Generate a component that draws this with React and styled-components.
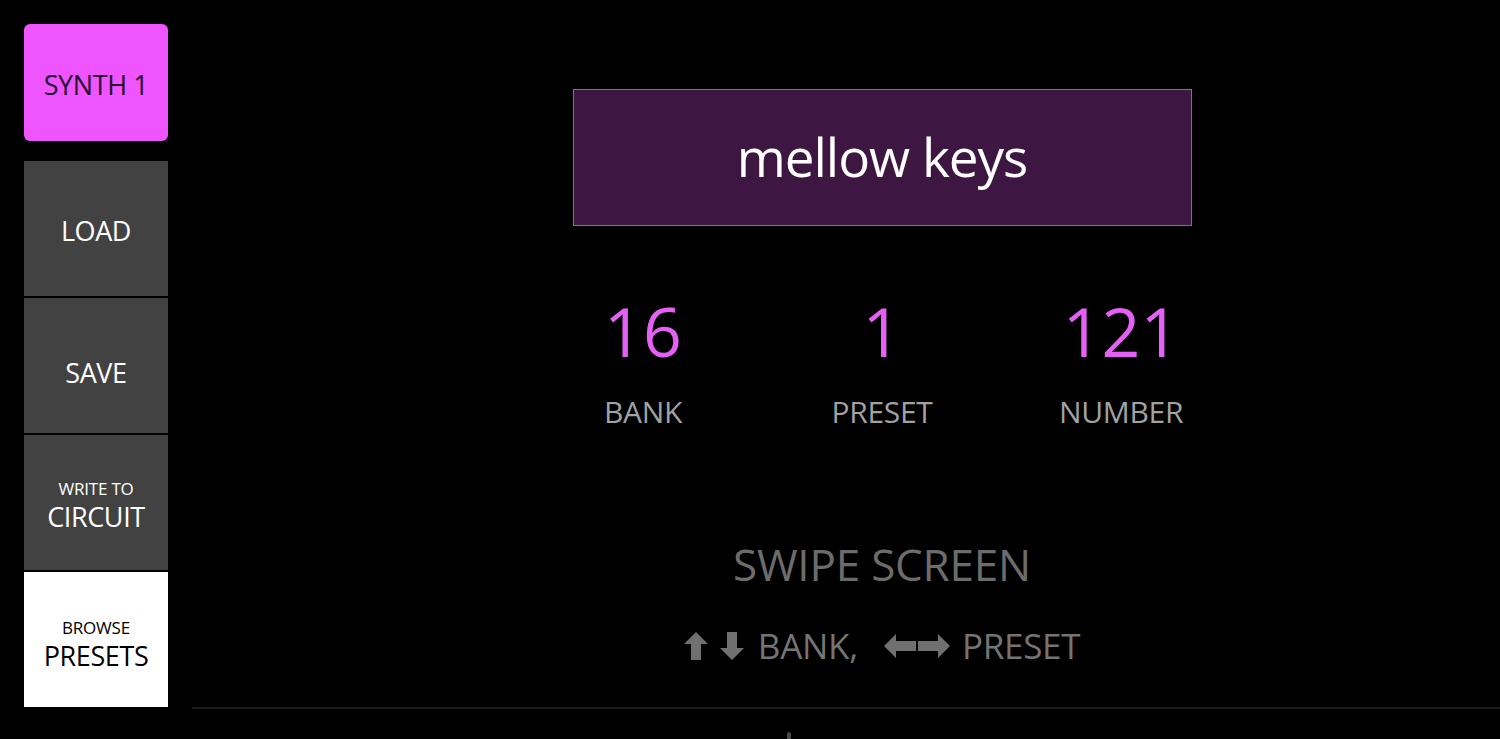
import React from "react";
import styled, { createGlobalStyle } from "styled-components";

const Global = createGlobalStyle`
  html, body { margin: 0; padding: 0; background: #000; }
  body { font-family: "Open Sans", "Noto Sans", sans-serif; }
`;

const Page = styled.div`
  display: flex;
  width: 1500px;
  height: 739px;
  background: #000;
  overflow: hidden;
`;

const Sidebar = styled.nav`
  display: flex;
  flex-direction: column;
  width: 144px;
  padding: 24px 24px 0 24px;
  flex-shrink: 0;
`;

const SideButton = styled.div`
  display: flex;
  flex-direction: column;
  align-items: center;
  justify-content: center;
  box-sizing: border-box;
  height: ${(p) => p.$h || 135}px;
  margin-bottom: ${(p) => p.$gap ?? 2}px;
  padding-top: ${(p) => p.$pt ?? 4}px;
  background: ${(p) =>
    p.$variant === "accent" ? "#ee55ff" : p.$variant === "light" ? "#ffffff" : "#424242"};
  color: ${(p) => (p.$variant === "accent" ? "#2a0830" : p.$variant === "light" ? "#000" : "#fff")};
  border-radius: ${(p) => (p.$variant === "accent" ? "6px" : "0")};
`;

const Big = styled.span`
  display: block;
  font-size: 27px;
  line-height: 32px;
  letter-spacing: -0.4px;
`;

const Small = styled.span`
  display: block;
  font-size: 17px;
  line-height: 24px;
  letter-spacing: -0.2px;
`;

const Main = styled.main`
  flex: 1;
  display: flex;
  flex-direction: column;
  padding-left: 72px;
  position: relative;
`;

const Content = styled.div`
  display: flex;
  flex-direction: column;
  align-items: center;
  flex: 1;
`;

const NameBox = styled.div`
  margin-top: 89px;
  width: 619px;
  height: 137px;
  box-sizing: border-box;
  border: 1px solid #b04cc4;
  background: #3d1641;
  display: flex;
  align-items: center;
  justify-content: center;
  color: #fff;
  font-size: 53px;
  letter-spacing: -1px;
  padding-bottom: 2px;
`;

const Stats = styled.div`
  display: grid;
  grid-template-columns: repeat(3, 239px);
  margin-top: 65px;
`;

const Stat = styled.div`
  display: flex;
  flex-direction: column;
  align-items: center;
`;

const Value = styled.div`
  color: #e560f5;
  font-size: 68px;
  line-height: 80px;
`;

const Label = styled.div`
  color: #a2a2a2;
  font-size: 30px;
  line-height: 40px;
  margin-top: 21px;
  letter-spacing: -0.3px;
`;

const Swipe = styled.div`
  margin-top: 104px;
  color: #6c6c6c;
  font-size: 44px;
  line-height: 56px;
  letter-spacing: -0.2px;
`;

const Hint = styled.div`
  margin-top: 32px;
  display: flex;
  align-items: center;
  color: #747474;
  font-size: 35px;
  line-height: 44px;
  letter-spacing: -0.3px;
`;

const Arrow = styled.svg`
  display: block;
  fill: #707070;
  margin-right: ${(p) => p.$mr || 0}px;
`;

const Footer = styled.div`
  height: 30px;
  border-top: 2px solid #1b1b1b;
  margin-left: -72px;
  position: relative;
`;

const Tick = styled.div`
  position: absolute;
  left: 595px;
  top: 23px;
  width: 4px;
  height: 8px;
  border-radius: 2px 2px 0 0;
  background: #4a4a4a;
`;

const Spacer = styled.span`
  display: inline-block;
  width: ${(p) => p.$w}px;
`;

function Up() {
  return (
    <Arrow width="24" height="28" viewBox="0 0 24 28" $mr={12}>
      <path d="M12 0 L24 12 L17 12 L17 28 L7 28 L7 12 L0 12 Z" />
    </Arrow>
  );
}
function Down() {
  return (
    <Arrow width="24" height="28" viewBox="0 0 24 28" $mr={14}>
      <path d="M7 0 L17 0 L17 16 L24 16 L12 28 L0 16 L7 16 Z" />
    </Arrow>
  );
}
function Left() {
  return (
    <Arrow width="32" height="24" viewBox="0 0 32 24" $mr={2}>
      <path d="M0 12 L12 0 L12 7 L32 7 L32 17 L12 17 L12 24 Z" />
    </Arrow>
  );
}
function Right() {
  return (
    <Arrow width="32" height="24" viewBox="0 0 32 24" $mr={12}>
      <path d="M0 7 L20 7 L20 0 L32 12 L20 24 L20 17 L0 17 Z" />
    </Arrow>
  );
}

export default function App() {
  return (
    <>
      <Global />
      <Page>
        <Sidebar>
          <SideButton $variant="accent" $h={117} $gap={20}>
            <Big>SYNTH 1</Big>
          </SideButton>
          <SideButton>
            <Big>LOAD</Big>
          </SideButton>
          <SideButton $pt={14}>
            <Big>SAVE</Big>
          </SideButton>
          <SideButton>
            <Small>WRITE TO</Small>
            <Big>CIRCUIT</Big>
          </SideButton>
          <SideButton $variant="light" $pt={8}>
            <Small>BROWSE</Small>
            <Big>PRESETS</Big>
          </SideButton>
        </Sidebar>
        <Main>
          <Content>
            <NameBox>mellow keys</NameBox>
            <Stats>
              <Stat>
                <Value>16</Value>
                <Label>BANK</Label>
              </Stat>
              <Stat>
                <Value>1</Value>
                <Label>PRESET</Label>
              </Stat>
              <Stat>
                <Value>121</Value>
                <Label>NUMBER</Label>
              </Stat>
            </Stats>
            <Swipe>SWIPE SCREEN</Swipe>
            <Hint>
              <Up />
              <Down />
              BANK,
              <Spacer $w={26} />
              <Left />
              <Right />
              PRESET
            </Hint>
          </Content>
          <Footer>
            <Tick />
          </Footer>
        </Main>
      </Page>
    </>
  );
}
